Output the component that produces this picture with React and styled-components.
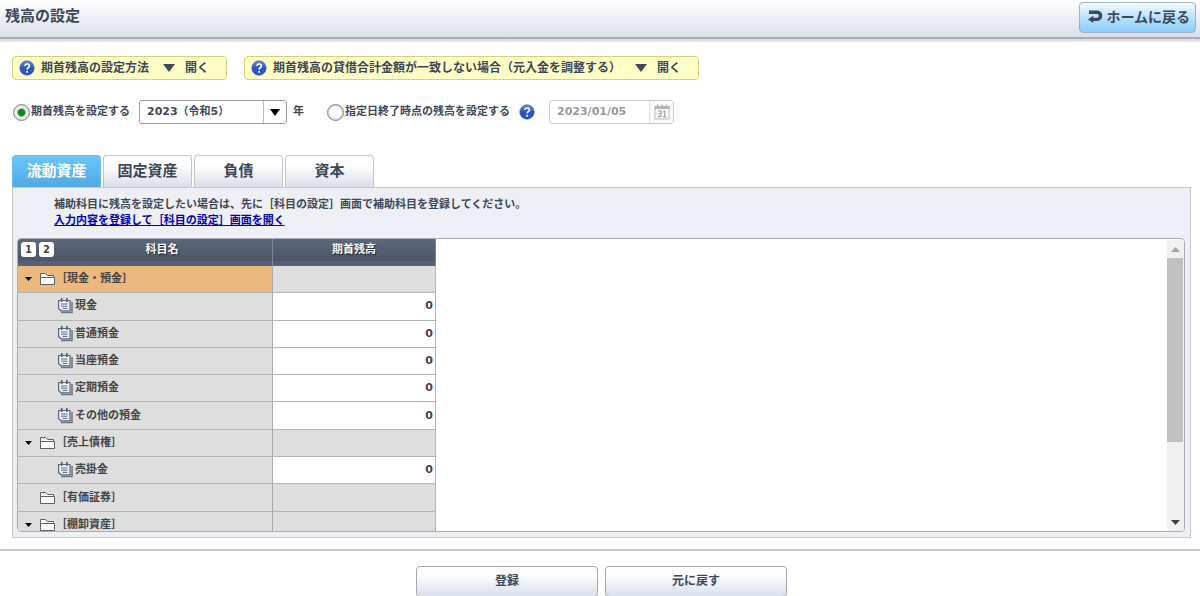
import React, { useState } from 'react'
import styled, { createGlobalStyle } from 'styled-components'

const GlobalStyle = createGlobalStyle`
  * {
    box-sizing: border-box;
  }

  body {
    margin: 0;
    background: #fff;
    color: #3d4758;
    font-family: 'DejaVu Sans', 'Noto Sans CJK JP', sans-serif;
    font-size: 11px;
    font-weight: bold;
    line-height: 16px;
  }

  button, input, select {
    font: inherit;
    color: inherit;
  }

  svg {
    display: block;
    flex: none;
  }
`

const Page = styled.div`
  overflow: hidden;
  height: 100vh;
`

const Header = styled.header`
  display: flex;
  justify-content: space-between;
  align-items: flex-start;
  height: 42px;
  padding: 0 4px 0 5px;
  background: linear-gradient(#fff, #dadfe9 37px, #a9abb3 37px, #a9abb3 39px, #dcd9dc 39px, #ece9ec);
`

const Title = styled.h1`
  margin: 4px 0 0;
  font-size: 15px;
  line-height: 24px;
`

const HomeButton = styled.button`
  display: flex;
  align-items: center;
  gap: 3px;
  height: 31px;
  margin-top: 2px;
  padding: 0 5px 2px 8px;
  border: 1px solid #9db0c6;
  border-radius: 4px;
  background: linear-gradient(#f4faff, #b9e1fd 50%, #8bcdfc);
  font-size: 14px;
`

const Helps = styled.div`
  display: flex;
  gap: 17px;
  padding: 14px 12px 0;
`

const HelpButton = styled.button`
  display: flex;
  align-items: center;
  height: 24px;
  padding: 0 17px 0 6px;
  border: 1px solid #d3d37c;
  border-radius: 4px;
  background: #ffffc5;
  font-size: 12px;

  .label {
    margin: 0 14px 0 6px;
  }

  .open {
    margin-left: 10px;
  }
`

const Options = styled.div`
  display: flex;
  align-items: center;
  height: 24px;
  margin-top: 20px;
  padding: 0 13px;
`

const RadioLabel = styled.label`
  display: flex;
  align-items: center;
  gap: 1px;
`

const Radio = styled.input`
  appearance: none;
  width: 17px;
  height: 17px;
  margin: 0;
  border: 1px solid #85878e;
  border-radius: 50%;
  background: radial-gradient(circle, #fff 5px, #c9cbd0 8px);

  &:checked {
    background: radial-gradient(circle, #0d8a16 3px, #fff 5px, #c9cbd0 8px);
  }
`

const YearBox = styled.label`
  display: flex;
  align-items: center;
  gap: 6px;
  margin: 0 23px 0 9px;
`

const SelectWrap = styled.span`
  display: grid;
  grid-template-columns: 1fr 23px;
  width: 148px;
  height: 24px;
  border: 1px solid #9a9ca2;
  border-radius: 3px;

  select {
    grid-area: 1 / 1 / 2 / 3;
    appearance: none;
    padding: 0 7px;
    border: 0;
    background: none;
  }

  .arrow {
    grid-area: 1 / 2;
    display: grid;
    place-items: center;
    border-left: 1px solid #b9bbc0;
    pointer-events: none;
  }
`

const HelpLink = styled.button`
  margin: 0 14px 0 9px;
  padding: 0;
  border: 0;
  background: none;
`

const DateBox = styled.span`
  display: flex;
  width: 125px;
  height: 24px;
  border: 1px solid #c8c9cd;
  border-radius: 3px;

  input {
    flex: 1;
    min-width: 0;
    padding: 0 7px;
    border: 0;
    background: none;
    color: #96989e;
  }

  button {
    display: grid;
    place-items: center;
    width: 24px;
    padding: 0;
    border: 0;
    border-left: 1px solid #d8d9dc;
    background: #fafafa;
  }
`

const Tabs = styled.div`
  display: flex;
  gap: 2px;
  margin: 31px 12px 0;
`

const Tab = styled.button`
  width: 89px;
  height: 32px;
  padding: 0 0 2px;
  border: 1px solid ${({ $active }) => ($active ? '#6cbcf0' : '#c3c5cb')};
  border-bottom: 0;
  border-radius: 4px 4px 0 0;
  background: ${({ $active }) => ($active ? 'linear-gradient(#6bc6fb, #52a9e4)' : 'linear-gradient(#fff 30%, #d9dde7)')};
  color: ${({ $active }) => ($active ? '#fff' : '#3d4758')};
  font-size: 15px;
`

const Panel = styled.section`
  margin: 0 9px 0 12px;
  padding: 9px 5px 5px 4px;
  border: 1px solid #c6c8ce;
  background: #eeeff4;
`

const Note = styled.p`
  margin: 0 0 9px;
  padding-left: 37px;

  a {
    color: #0000b4;
  }
`

const Grid = styled.div`
  display: flex;
  justify-content: space-between;
  height: 294px;
  overflow: hidden;
  border: 1px solid #a9acb6;
  border-radius: 4px;
  background: #fff;
`

const Accounts = styled.table`
  table-layout: fixed;
  width: 418px;
  height: 300px;
  border-collapse: separate;
  border-spacing: 0;
  color: #444;
`

const HeadCell = styled.th`
  position: relative;
  width: ${({ $width }) => $width};
  height: 27px;
  padding: 0 0 5px ${({ $indent }) => $indent || 0};
  border-right: 1px solid #7c8596;
  background: linear-gradient(#5c677c, #4b566b 80%, #566176 80%);
  color: #fff;
  text-shadow: 1px 1px 1px #1c222c;
`

const Levels = styled.span`
  position: absolute;
  top: 3px;
  left: 3px;
  display: flex;
  gap: 3px;

  button {
    width: 15px;
    height: 15px;
    padding: 0;
    border: 0;
    border-radius: 3px;
    background: #fff;
    color: #3d4758;
    font-size: 10px;
    line-height: 15px;
  }
`

const NameCell = styled.td`
  padding: 0 0 0 ${({ $group }) => ($group ? '6px' : '40px')};
  border-right: 1px solid #a9a9a9;
  border-bottom: 1px solid #b4b4b4;
  background: ${({ $selected }) => ($selected ? '#ebb87e' : '#dedede')};

  div {
    display: flex;
    align-items: center;
    gap: ${({ $group }) => ($group ? '0' : '2px')};
  }
`

const AmountCell = styled.td`
  padding: 0 2px;
  border-right: 1px solid #b4b4b4;
  border-bottom: 1px solid #b4b4b4;
  background: ${({ $group }) => ($group ? '#dedede' : '#fff')};
  text-align: right;
`

const Scrollbar = styled.div`
  display: flex;
  flex-direction: column;
  width: 17px;
  margin: 1px 0 0;
  padding: 0 1px 0 0;
  background: #f0f0f0;

  button {
    display: grid;
    place-items: center;
    height: 18px;
    padding: 0;
    border: 0;
    background: none;
  }

  .track {
    flex: 1;
  }

  .thumb {
    height: 72%;
    background: #c1c1c1;
  }
`

const Footer = styled.footer`
  display: flex;
  justify-content: center;
  gap: 7px;
  margin-top: 11px;
  padding: 15px 0 0 3px;
  border-top: 2px solid #c4c5c8;
`

const FooterButton = styled.button`
  width: 182px;
  height: 31px;
  padding: 0 0 2px;
  border: 1px solid #a5a8b0;
  border-radius: 4px;
  background: linear-gradient(#fff 25%, #d9deea);
  font-size: 12px;
`

const HelpIcon = () => (
  <svg width="16" height="16" viewBox="0 0 16 16" aria-hidden="true">
    <defs>
      <linearGradient id="help" x2="0" y2="1">
        <stop offset="0" stopColor="#6f93df" />
        <stop offset=".5" stopColor="#2c55bd" />
        <stop offset="1" stopColor="#2350d0" />
      </linearGradient>
    </defs>
    <circle cx="8" cy="8" r="7.2" fill="url(#help)" stroke="#2a4ca8" strokeWidth=".6" />
    <path d="M5.8 6.1C5.8 3.3 10.4 3.4 10.4 6C10.4 7.7 8.1 7.8 8.1 9.6" fill="none" stroke="#fff" strokeWidth="1.6" />
    <circle cx="8.1" cy="11.8" r="1.1" fill="#fff" />
  </svg>
)

const Triangle = ({ width = 10, height = 7, color = '#000', up }) => (
  <svg width={width} height={height} viewBox="0 0 10 7" preserveAspectRatio="none" aria-hidden="true">
    <path d={up ? 'M0 7H10L5 0Z' : 'M0 0H10L5 7Z'} fill={color} />
  </svg>
)

const ReturnIcon = () => (
  <svg width="15" height="13" viewBox="0 0 15 13" aria-hidden="true">
    <path d="M1 2.3H9.3C13.6 2.3 13.6 9.4 9.3 9.4H4.5" fill="none" stroke="#3d4758" strokeWidth="3.4" />
    <path d="M0 9.4L5.2 5.8V13Z" fill="#3d4758" />
  </svg>
)

const CalendarIcon = () => (
  <svg width="16" height="16" viewBox="0 0 16 16" aria-hidden="true">
    <path d="M1 2V15H15V2" fill="#fff" stroke="#b5b7bc" />
    <path d="M.5 2H3V.5H4.5V2H7.2V.5H8.8V2H11.5V.5H13V2H15.5V5H.5Z" fill="#b5b7bc" />
    <path d="M3.5 6.8H7V12.5H3.5M4.2 9.6H7M9 8L10.8 7V13M9 12.8H12.5" fill="none" stroke="#a5a7ad" strokeWidth="1.3" />
  </svg>
)

const FolderIcon = () => (
  <svg width="16" height="14" viewBox="0 0 16 14" aria-hidden="true">
    <path d="M.5 12.5V1.5H5.5L7.5 3.5H13.5V5.5" fill="#fff" stroke="#59606e" />
    <path d="M.5 5.5H14.5V12.5H.5Z" fill="#fff" stroke="#59606e" />
  </svg>
)

const AccountIcon = () => (
  <svg width="15" height="16" viewBox="0 0 15 16" aria-hidden="true">
    <path d="M3 14.5H14V4" fill="none" stroke="#6d7789" strokeWidth="1.6" />
    <path d="M.6 2.5H12V12.8H3L.6 10.5Z" fill="#f3f4f7" stroke="#59647a" strokeWidth="1.2" />
    <path d="M3 6H9.5M3 8.2H9.5M4.5 10.4H9.5" stroke="#59647a" />
    <path d="M3.7 0V4M8.9 0V4" stroke="#59647a" strokeWidth="1.8" />
  </svg>
)

const helps = ['期首残高の設定方法', '期首残高の貸借合計金額が一致しない場合（元入金を調整する）']

const tabs = ['流動資産', '固定資産', '負債', '資本']

const rows = [
  { name: '［現金・預金］', group: true, expanded: true, selected: true },
  { name: '現金' },
  { name: '普通預金' },
  { name: '当座預金' },
  { name: '定期預金' },
  { name: 'その他の預金' },
  { name: '［売上債権］', group: true, expanded: true },
  { name: '売掛金' },
  { name: '［有価証券］', group: true },
  { name: '［棚卸資産］', group: true, expanded: true },
]

const Expander = styled.span`
  display: grid;
  place-items: center;
  width: 9px;
  margin-right: 7px;
`

const AccountRow = ({ name, group, expanded, selected }) => (
  <tr>
    <NameCell $group={group} $selected={selected}>
      <div>
        {group && <Expander>{expanded && <Triangle width={7} height={4} />}</Expander>}
        {group ? <FolderIcon /> : <AccountIcon />}
        <span>{name}</span>
      </div>
    </NameCell>
    <AmountCell $group={group}>{group ? '' : '0'}</AmountCell>
  </tr>
)

const App = () => {
  const [tab, setTab] = useState(0)
  const [mode, setMode] = useState('opening')

  return (
    <Page>
      <GlobalStyle />
      <Header>
        <Title>残高の設定</Title>
        <HomeButton><ReturnIcon />ホームに戻る</HomeButton>
      </Header>

      <Helps>
        {helps.map((label) => (
          <HelpButton key={label}>
            <HelpIcon />
            <span className='label'>{label}</span>
            <Triangle width={12} height={8} color='#3d4758' />
            <span className='open'>開く</span>
          </HelpButton>
        ))}
      </Helps>

      <Options>
        <RadioLabel>
          <Radio type='radio' name='mode' checked={mode === 'opening'} onChange={() => setMode('opening')} />
          期首残高を設定する
        </RadioLabel>
        <YearBox>
          <SelectWrap>
            <select>
              <option>2023（令和5）</option>
            </select>
            <span className='arrow'><Triangle /></span>
          </SelectWrap>
          年
        </YearBox>
        <RadioLabel>
          <Radio type='radio' name='mode' checked={mode === 'date'} onChange={() => setMode('date')} />
          指定日終了時点の残高を設定する
        </RadioLabel>
        <HelpLink aria-label='ヘルプ'><HelpIcon /></HelpLink>
        <DateBox>
          <input type='text' aria-label='指定日' defaultValue='2023/01/05' disabled={mode !== 'date'} />
          <button aria-label='カレンダー' disabled={mode !== 'date'}><CalendarIcon /></button>
        </DateBox>
      </Options>

      <Tabs role='tablist'>
        {tabs.map((name, i) => (
          <Tab key={name} role='tab' aria-selected={tab === i} $active={tab === i} onClick={() => setTab(i)}>
            {name}
          </Tab>
        ))}
      </Tabs>

      <Panel>
        <Note>
          補助科目に残高を設定したい場合は、先に［科目の設定］画面で補助科目を登録してください。<br />
          <a href='#accounts'>入力内容を登録して［科目の設定］画面を開く</a>
        </Note>
        <Grid>
          <Accounts>
            <thead>
              <tr>
                <HeadCell $width='255px' $indent='34px'>
                  <Levels>
                    <button>1</button>
                    <button>2</button>
                  </Levels>
                  <span>科目名</span>
                </HeadCell>
                <HeadCell>期首残高</HeadCell>
              </tr>
            </thead>
            <tbody>
              {rows.map((row) => <AccountRow key={row.name} {...row} />)}
            </tbody>
          </Accounts>
          <Scrollbar>
            <button aria-label='上へ'><Triangle up width={9} height={5} color='#a3a3a3' /></button>
            <div className='track'><div className='thumb' /></div>
            <button aria-label='下へ'><Triangle width={9} height={5} color='#404040' /></button>
          </Scrollbar>
        </Grid>
      </Panel>

      <Footer>
        <FooterButton>登録</FooterButton>
        <FooterButton>元に戻す</FooterButton>
      </Footer>
    </Page>
  )
}

export default App
